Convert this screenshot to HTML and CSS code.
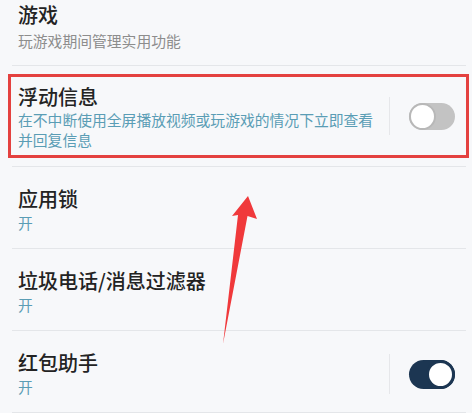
FILE: index.html
```html
<!DOCTYPE html>
<html lang="zh">
<head>
<meta charset="utf-8">
<link rel="stylesheet" href="styles.css">
</head>
<body>
<div class="page">
  <div class="row row-top">
    <div class="text">
      <div class="title">游戏</div>
      <div class="sub grey">玩游戏期间管理实用功能</div>
    </div>
  </div>
  <div class="sep"></div>
  <div class="highlight">
    <div class="row row-box">
      <div class="text">
        <div class="title">浮动信息</div>
        <div class="sub blue">在不中断使用全屏播放视频或玩游戏的情况下立即查看并回复信息</div>
      </div>
      <div class="divider"></div>
      <div class="toggle off"><div class="knob"></div></div>
    </div>
  </div>
  <div class="sep sep-after-box"></div>
  <div class="row row-std">
    <div class="text">
      <div class="title">应用锁</div>
      <div class="sub blue">开</div>
    </div>
  </div>
  <div class="sep"></div>
  <div class="row row-std">
    <div class="text">
      <div class="title">垃圾电话/消息过滤器</div>
      <div class="sub blue">开</div>
    </div>
  </div>
  <div class="sep"></div>
  <div class="row row-std">
    <div class="text">
      <div class="title">红包助手</div>
      <div class="sub blue">开</div>
    </div>
    <div class="divider tall"></div>
    <div class="toggle on"><div class="knob"></div></div>
  </div>
  <div class="sep"></div>
  <svg class="arrow" width="472" height="413" viewBox="0 0 472 413">
    <polygon points="248,196 257,219 247.5,216 223,344 238,215 232,216" fill="#f0393b"/>
  </svg>
</div>
</body>
</html>
```
FILE: styles.css
```css
html, body {
  margin: 0;
  padding: 0;
  background: #f7f8fa;
}
.page {
  position: relative;
  width: 472px;
  height: 413px;
  overflow: hidden;
  font-family: "Noto Sans CJK SC", "Noto Sans", sans-serif;
}
.row {
  display: flex;
  align-items: center;
  padding-left: 18px;
  padding-right: 17px;
}
.text {
  flex: 1;
  min-width: 0;
}
.title {
  font-size: 20px;
  line-height: 24px;
  font-weight: 500;
  color: #232323;
}
.sub {
  font-size: 14.8px;
  line-height: 20px;
}
.grey { color: #8d8d8d; }
.blue { color: #5a9db5; }
.row-top {
  padding-top: 3px;
  padding-bottom: 14px;
}
.row-top .sub { margin-top: 4px; }
.sep {
  height: 1px;
  background: #e4e6e9;
  margin: 0 6px 0 12px;
}
.highlight {
  margin: 8px 3px 8px 8px;
  border: 3px solid #e4413f;
  height: 78px;
  box-sizing: content-box;
}
.row-box {
  height: 78px;
  padding-left: 7px;
  padding-right: 11px;
  box-sizing: border-box;
}
.row-box .text { padding-top: 2px; }
.row-box .sub { margin-top: 1px; padding-right: 3px; }
.row-std {
  height: 81px;
  box-sizing: border-box;
  padding-top: 20px;
  padding-bottom: 15px;
}
.row-std .text { align-self: flex-start; }
.row-std .sub { margin-top: 2px; }
.divider {
  width: 1px;
  height: 38px;
  background: #e6e7ea;
  margin: 0 19px 0 10px;
}
.divider.tall {
  height: 40px;
}
.toggle {
  position: relative;
  width: 46px;
  height: 27px;
  border-radius: 14px;
  flex: none;
}
.toggle.off {
  background: #c3c3c3;
}
.toggle.on {
  background: #1c3652;
  height: 29px;
  border-radius: 15px;
}
.knob {
  position: absolute;
  top: 0;
  border-radius: 50%;
  background: #ffffff;
  box-sizing: border-box;
}
.off .knob {
  left: 0;
  width: 27px;
  height: 27px;
  border: 2px solid #b8b8b8;
}
.on .knob {
  right: 0;
  width: 29px;
  height: 29px;
  border: 3px solid #1c3652;
}
.arrow {
  position: absolute;
  left: 0;
  top: 0;
  pointer-events: none;
}
```
